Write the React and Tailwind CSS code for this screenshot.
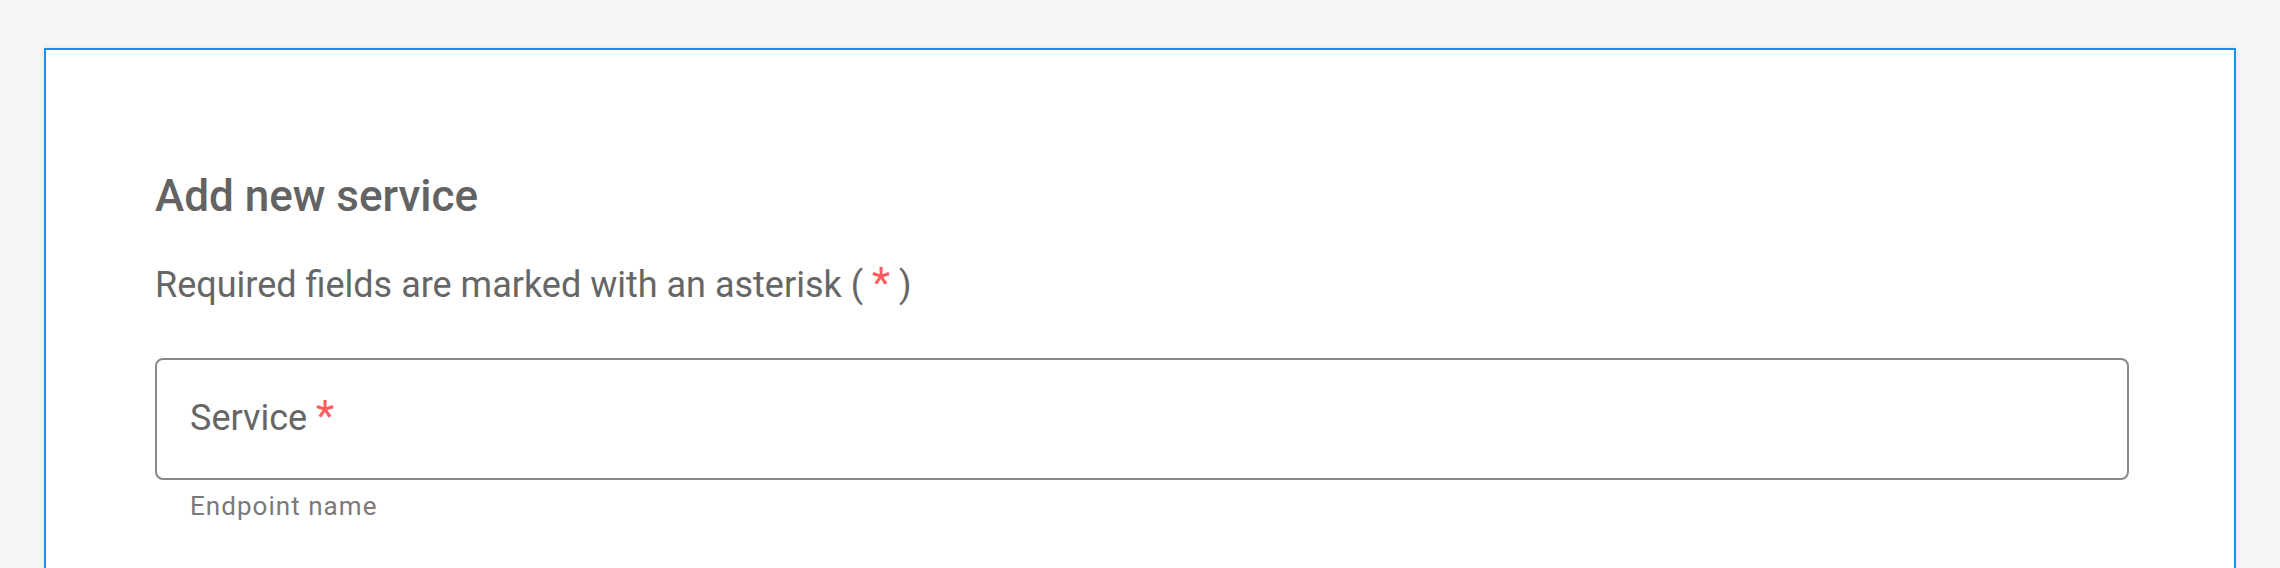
import React from 'react';

const Required = ({ className = '' }) => (
    <span className={`text-[#ff5b5b] ${className}`}>*</span>
);

const App = () => {
    return (
        <div className="min-h-screen bg-[#f5f6f8] px-[44px] pt-[48px] font-['Roboto',sans-serif]">
            <div className="bg-white border-2 border-[#1b8fe5] shadow-[0_0_6px_rgba(0,0,0,0.08)] pl-[109px] pr-[105px] pt-[120px] pb-[120px]">
                <h2 className="text-[44px] leading-[52px] font-medium text-[#636363]">Add new service</h2>

                <p className="mt-[40px] text-[36px] leading-[42px] text-[#666666]">
                    Required fields are marked with an asterisk ({' '}
                    <Required className="text-[42px] leading-none" />{' '})
                </p>

                <div className="mt-[52px] h-[122px] rounded-[8px] border-2 border-[#898989] pl-[33px] pt-[35px]">
                    <label className="text-[36px] leading-[42px] text-[#666666]">
                        Service <Required className="text-[42px] leading-none" />
                    </label>
                </div>
                <p className="mt-[11px] pl-[35px] text-[26px] leading-[30px] tracking-[0.04em] text-[#7a7a7a]">
                    Endpoint name
                </p>
            </div>
        </div>
    );
};

export default App;
